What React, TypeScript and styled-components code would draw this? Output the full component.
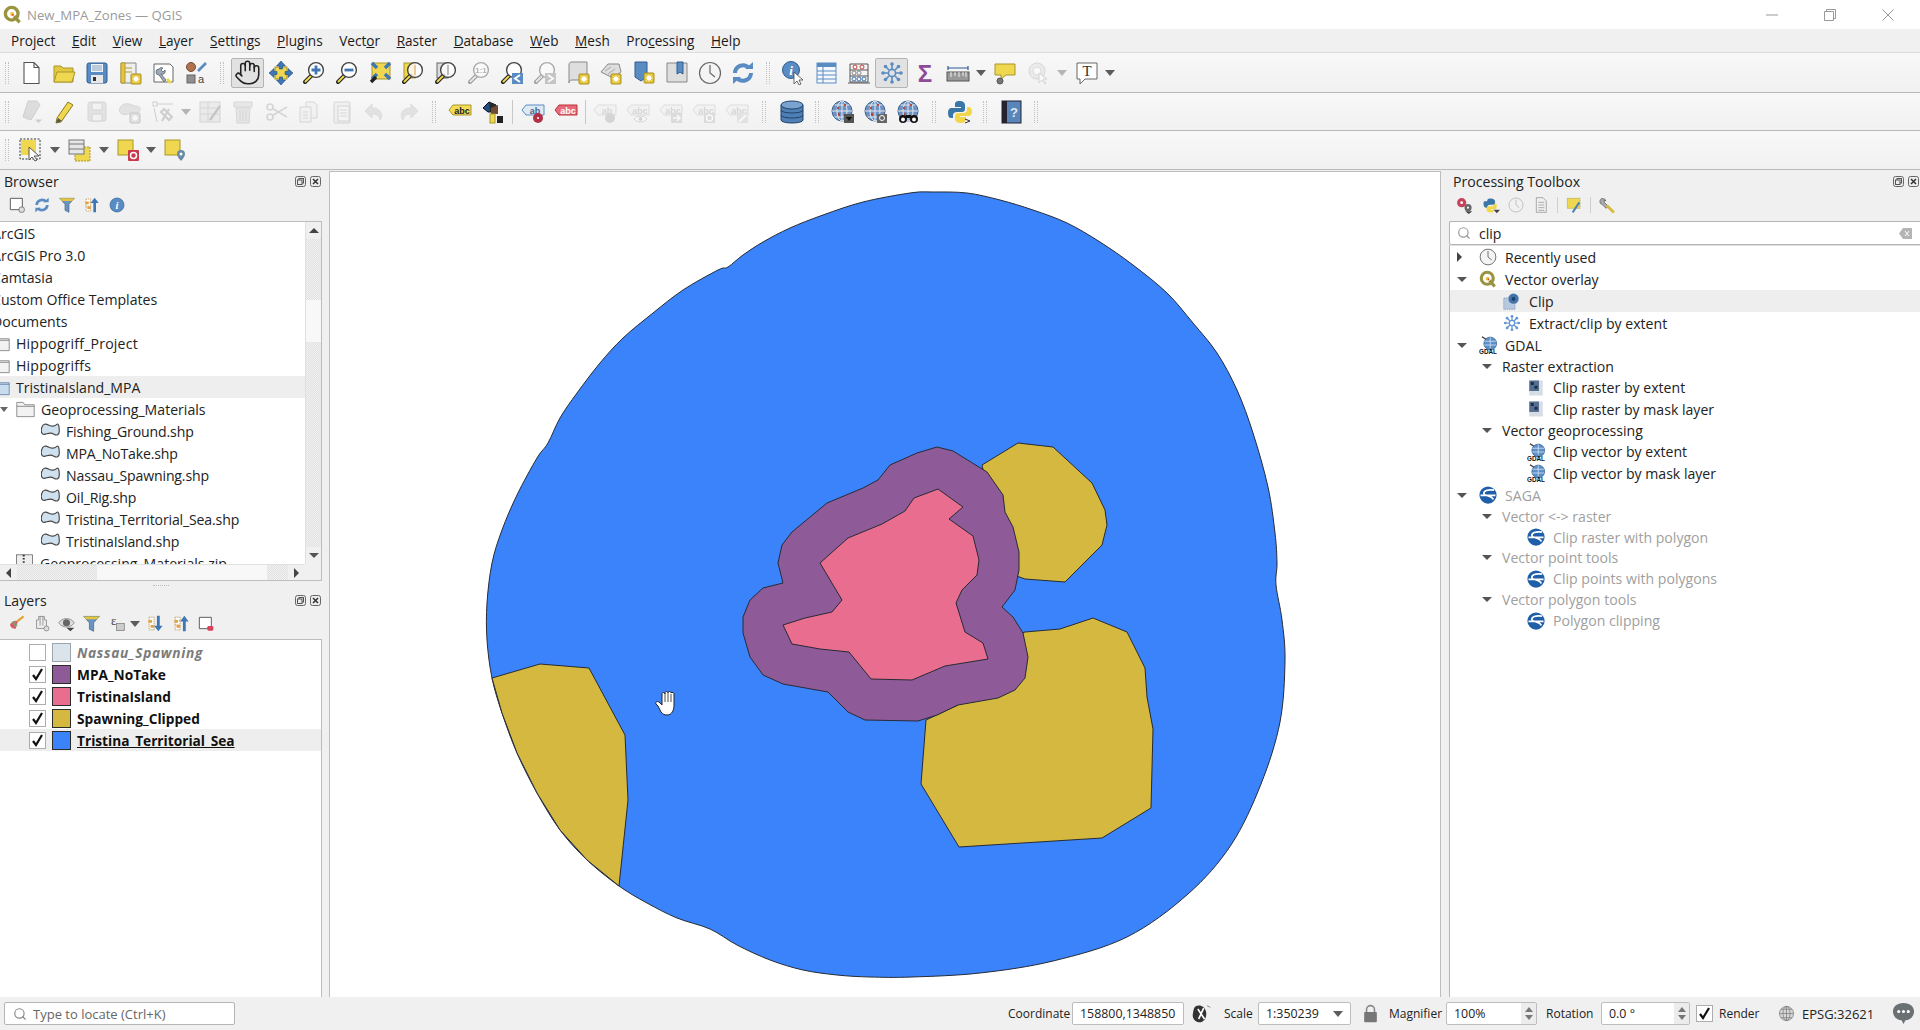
import React from "react";
import styled, { createGlobalStyle } from "styled-components";
import { Hand, Search } from "lucide-react";

const Global = createGlobalStyle`
  html, body { margin: 0; padding: 0; background: #f0f0f0; overflow: hidden; }
  * { box-sizing: border-box; }
`;

const FONT = `"Open Sans", "Noto Sans", "Liberation Sans", sans-serif`;
const Y = "#efd84f", YD = "#a8962c", B = "#5a8cc4", BD = "#2d5c90";

/* ---------- icon drawing helpers ---------- */
const Star = ({ x = 18, y = 18 }: { x?: number; y?: number }) => (
  <g>
    <rect x={x - 5} y={y - 5} width="10" height="10" rx="1" fill="#e6c53a" stroke="#a88f1e" />
    <circle cx={x} cy={y} r="2.3" fill="#fff" />
    <path d={`M${x - 3.5} ${y}h7M${x} ${y - 3.5}v7M${x - 2.5} ${y - 2.5}l5 5M${x + 2.5} ${y - 2.5}l-5 5`} stroke="#fff" strokeWidth="1" />
  </g>
);
const Lens = ({ fill = "#fff", children }: { fill?: string; children?: React.ReactNode }) => (
  <g>
    <path d="M9.5 14.5L3 21" stroke="#222" strokeWidth="4" strokeLinecap="round" />
    <path d="M9 15L3.5 20.5" stroke={Y} strokeWidth="2" strokeLinecap="round" />
    <circle cx="14" cy="9" r="7.4" fill={fill} stroke="#444" strokeWidth="1.4" />
    {children}
  </g>
);
const Refresh = () => (
  <g fill="none" stroke={B} strokeWidth="4">
    <path d="M4 12a8 8 0 0 1 14-5" />
    <path d="M20 12a8 8 0 0 1-14 5" />
    <path d="M14 8h8V1zM10 16H2v7z" fill={B} stroke="none" />
  </g>
);
const Snow = ({ c = B }: { c?: string }) => (
  <g stroke={c} fill="none" strokeWidth="1.6">
    <circle cx="12" cy="12" r="3.6" />
    <path d="M12 2v6M12 16v6M2 12h6M16 12h6M5 5l4 4M15 15l4 4M19 5l-4 4M9 15l-4 4" />
    <g fill={c} stroke="none">
      <circle cx="12" cy="3" r="1.8" /><circle cx="12" cy="21" r="1.8" /><circle cx="3" cy="12" r="1.8" /><circle cx="21" cy="12" r="1.8" />
      <circle cx="5.5" cy="5.5" r="1.8" /><circle cx="18.5" cy="18.5" r="1.8" /><circle cx="18.5" cy="5.5" r="1.8" /><circle cx="5.5" cy="18.5" r="1.8" />
    </g>
  </g>
);
const Label = ({ t = "abc", c = "#222", f = "#f3dc55", s = "#a8962c" }: { t?: string; c?: string; f?: string; s?: string }) => (
  <g>
    <path d="M1 10l4-5h18v10H5z" fill={f} stroke={s} />
    <text x="14" y="13.5" fontSize="9" fontWeight="700" fontFamily="Liberation Sans, sans-serif" textAnchor="middle" fill={c}>{t}</text>
  </g>
);
const Globe = () => (
  <g>
    <circle cx="11" cy="11" r="10" fill="#6e93c2" stroke="#3d5f8a" />
    <path d="M1 11h20M11 1v20M3.5 5h15M3.5 17h15" stroke="#dfe8f2" strokeWidth="1" />
    <ellipse cx="11" cy="11" rx="5" ry="10" fill="none" stroke="#dfe8f2" />
    <path d="M6 7h2v2H6zM13 4h2v2h-2zM7 13h2v3H7z" fill="#b4493e" />
  </g>
);
const Sel = () => <rect x="2" y="2" width="15" height="15" fill={Y} stroke={YD} />;
const Saga = () => (
  <g>
    <circle cx="12" cy="12" r="11.5" fill="#1f5ea8" />
    <path d="M20 5.500C11 4 6 7 6.500 10c.5 3.500 11 2 12.500 8M2 12.500h20" fill="none" stroke="#fff" strokeWidth="2.300" />
  </g>
);
const Q = () => (
  <g>
    <circle cx="11" cy="11" r="8" fill="none" stroke="#9a9340" strokeWidth="4.2" />
    <path d="M14 14l7 8" stroke="#9a9340" strokeWidth="4.2" />
    <circle cx="11.5" cy="11.5" r="2.6" fill="#efc53c" />
    <circle cx="12.5" cy="12.5" r="1.1" fill="#d2483a" />
  </g>
);

const ICONS: Record<string, React.ReactNode> = {
  new: <path d="M5 1.5h10l5 5V22.5H5zM15 1.5v5h5" fill="#fff" stroke="#555" strokeWidth="1.1" />,
  open: <g stroke={YD}><path d="M2 21V5h7l2 2h10v14z" fill="#e3c93f" /><path d="M2 21l3-10h18l-3 10z" fill={Y} /></g>,
  save: <g><rect x="2" y="2" width="20" height="20" rx="2" fill={B} stroke={BD} /><rect x="6" y="3" width="12" height="8" fill="#eef2f6" /><path d="M7 5h10M7 7h10M7 9h10" stroke="#8aa3bf" /><rect x="6" y="14" width="12" height="8" fill="#e8e8e8" /><rect x="8" y="16" width="3" height="4" fill="#333" /></g>,
  newLayout: <g><path d="M3 2h15v20H3z" fill="#eee" stroke="#888" /><path d="M3 2h4v20H3zM7 7h7M7 11h7" fill="#e6c53a" stroke="#b79d2c" /><Star /></g>,
  layoutMgr: <g><path d="M3 3h16l3 3v15H3z" fill="#fff" stroke="#666" /><path d="M8 8a3 3 0 0 1 4-1l-2 2 2 2 2-2a3 3 0 0 1-4 4l5 6-2 2-5-7a3 3 0 0 1 0-6z" fill="#9aa9b8" stroke="#555" strokeWidth=".7" /><path d="M16 18l4 4" stroke={Y} strokeWidth="3" /></g>,
  style: <g><circle cx="7" cy="6" r="4.5" fill="#b0714f" stroke="#7a4b33" /><rect x="3" y="14" width="8" height="8" fill="#8f8f8f" stroke="#666" /><path d="M14 10L22 2" stroke={B} strokeWidth="2.6" /><text x="14" y="22" fontSize="11" fontFamily="Liberation Sans,sans-serif" fill="#444">a</text></g>,
  pan: <g><rect x="6" y="6" width="12" height="12" fill={Y} stroke={YD} /><g fill="#3f76b5" stroke="#234f80" strokeWidth=".6"><path d="M12 0l4.5 5h-3v3h-3V5h-3zM12 24l4.5-5h-3v-3h-3v3h-3zM0 12l5-4.5v3h3v3H5v3zM24 12l-5-4.5v3h-3v3h3v3z" /></g></g>,
  zoomIn: <Lens><path d="M14 4.5v9M9.5 9h9" stroke="#3f76b5" strokeWidth="2.8" /></Lens>,
  zoomOut: <Lens><path d="M9.5 9h9" stroke="#3f76b5" strokeWidth="2.8" /></Lens>,
  zoomFull: <g><rect x="4" y="2" width="18" height="16" fill={Y} stroke={YD} /><path d="M4 2l5 5M22 2l-5 5M4 18l5-5M22 18l-5-5" stroke="#3f76b5" strokeWidth="3.5" /><path d="M8 16L3 21" stroke="#222" strokeWidth="3.4" /></g>,
  zoomSel: <g><rect x="3" y="2" width="11" height="15" fill={Y} stroke={YD} /><Lens fill="#ffffffcc"><path d="M14 4v10" stroke="#e8c9a0" strokeWidth="2" /></Lens></g>,
  zoomLayer: <g><rect x="3" y="2" width="11" height="15" fill="#ddd" stroke="#666" /><Lens fill="#ffffffcc"><path d="M14 4v10" stroke="#bbb" strokeWidth="2" /></Lens></g>,
  zoom11: <Lens><text x="14" y="12" fontSize="8" fontWeight="700" textAnchor="middle" fontFamily="Liberation Sans,sans-serif" fill="#555">1:1</text></Lens>,
  zoomLast: <g><Lens /><rect x="12" y="12" width="11" height="11" fill={B} /><path d="M20 14l-5 3.5 5 3.5" fill="none" stroke="#fff" strokeWidth="2" /></g>,
  zoomNext: <g><Lens /><rect x="12" y="12" width="11" height="11" fill={B} /><path d="M15 14l5 3.5-5 3.5" fill="none" stroke="#fff" strokeWidth="2" /></g>,
  newMap: <g><path d="M3 4c0-2 1-3 3-3h15v18H6c-2 0-3 1-3 3z" fill="#dedede" stroke="#888" /><Star x={18} y={18} /></g>,
  map3d: <g><path d="M2 11L9 3h11l2 8-8 6z" fill="#dedede" stroke="#888" /><path d="M6 10l6-4M9 13l7-5" stroke="#aaa" /><Star x={17} y={18} /></g>,
  newBm: <g><path d="M3 1h12v15l-6 4-6-4z" fill={B} stroke={BD} /><Star x={17} y={17} /></g>,
  showBm: <g><path d="M2 2h20v19H2z" fill="#dedede" stroke="#888" /><path d="M12 1h6v12l-3-2-3 2z" fill={B} stroke={BD} /></g>,
  clock: <g><circle cx="12" cy="12" r="10.5" fill="#f4f4f4" stroke="#666" strokeWidth="1.2" /><path d="M12 4v8l5 4" fill="none" stroke="#666" strokeWidth="1.2" /></g>,
  refresh: <Refresh />,
  identify: <g><circle cx="10" cy="9" r="8.5" fill={B} stroke={BD} /><text x="10" y="14" fontSize="13" fontWeight="700" fontStyle="italic" textAnchor="middle" fontFamily="Liberation Serif,serif" fill="#fff">i</text><path d="M13 11v12l3-3 2 4 2-1-2-4h4z" fill="#fff" stroke="#444" strokeWidth=".8" /></g>,
  table: <g><rect x="3" y="2" width="19" height="20" fill="#f4f7fb" stroke={B} /><rect x="3" y="2" width="19" height="4" fill={B} /><path d="M3 10h19M3 14h19M3 18h19M9 6v16" stroke={B} /></g>,
  calc: <g fill="none"><path d="M3 3v18h18V3M3 3h18M1 22h22" stroke="#555" /><path d="M3 9h18M3 15h18" stroke="#555" /><circle cx="8" cy="6" r="2" stroke="#c0443a" /><circle cx="15" cy="6" r="2" stroke="#c0443a" /><circle cx="7" cy="12" r="2" stroke="#888" /><circle cx="12" cy="12" r="2" stroke="#888" /><circle cx="7" cy="18" r="2" stroke="#3f76b5" /><circle cx="12" cy="18" r="2" stroke="#3f76b5" /><circle cx="17" cy="18" r="2" stroke="#3f76b5" /></g>,
  gear: <Snow />,
  sigma: <text x="12" y="21" fontSize="24" fontWeight="700" textAnchor="middle" fontFamily="Liberation Sans,sans-serif" fill="#8e4a98">Σ</text>,
  measure: <g><path d="M2 7h20M2 5v4M22 5v4" stroke="#2d5c90" strokeWidth="1.2" /><rect x="1" y="11" width="22" height="9" fill="#999" stroke="#555" /><path d="M5 11v5M9 11v4M13 11v5M17 11v4M20 11v5" stroke="#eee" /></g>,
  tip: <g><path d="M2 3h20v11H13l-5 4v-4H2z" fill={Y} stroke={YD} /><circle cx="7" cy="20" r="3" fill="#777" stroke="#555" /></g>,
  maptip: <g><circle cx="11" cy="10" r="8" fill="#ddd" stroke="#aaa" /><circle cx="11" cy="10" r="4" fill="#fff" stroke="#bbb" /><path d="M13 12v10l3-3 3 4 1-1-3-4h4z" fill="#fff" stroke="#aaa" /></g>,
  textAnn: <g><path d="M2 2h20v16H10l-5 5v-5H2z" fill="#fff" stroke="#666" /><text x="12" y="15" fontSize="15" textAnchor="middle" fontFamily="Liberation Serif,serif" fill="#333">T</text></g>,
  edits: <g><path d="M9 1h9l3 4-9 15-8-3z" fill="#bbb" stroke="#999" /><path d="M16 19.500h7l-3.500 3.500z" fill="#999" /></g>,
  pencil: <g><path d="M16 2l5 3L9 22l-5 1 1-5z" fill={Y} stroke="#8a7a20" /><path d="M6 18l4 3-6 2z" fill="#555" /></g>,
  saveEd: <g fill="#ccc" stroke="#aaa"><rect x="3" y="2" width="18" height="19" rx="2" /><rect x="7" y="3" width="10" height="7" fill="#eee" /><rect x="7" y="14" width="10" height="7" fill="#eee" /></g>,
  addFeat: <g><path d="M2 8c2-5 8-5 12-3s8 0 8 4-5 6-9 5-6 2-9 0-3-3-2-6z" fill="#c8c8c8" stroke="#aaa" /><Star x={17} y={18} /></g>,
  vertex: <g fill="none" stroke="#999"><rect x="2" y="2" width="4" height="4" /><path d="M6 4h16M3 8l3 14" /><path d="M10 12l8 8 3-3-8-8-3 3zM18 9l-7 12" strokeWidth="2" /></g>,
  attr: <g><rect x="2" y="2" width="20" height="20" fill="#ddd" stroke="#aaa" /><path d="M2 8h20M2 14h20M10 2v20" stroke="#aaa" /><path d="M12 20L22 6" stroke="#888" strokeWidth="2.4" /></g>,
  del: <g fill="#d4d4d4" stroke="#aaa"><path d="M3 2h18v5H3z" /><path d="M5 8h14l-1 15H6z" /><path d="M9 10v11M12 10v11M15 10v11" /></g>,
  cut: <g fill="none" stroke="#aaa" strokeWidth="1.6"><circle cx="6" cy="7" r="3" /><circle cx="6" cy="17" r="3" /><path d="M8.500 8.500L23 17M8.500 15.500L23 7" /></g>,
  copy: <g fill="#eee" stroke="#aaa"><path d="M9 2h8l3 3v13H9z" /><path d="M3 7h11v15H3zM6 12h5M6 15h5M6 18h5" /></g>,
  paste: <g fill="#e8e8e8" stroke="#aaa"><rect x="4" y="2" width="16" height="21" rx="1" /><rect x="8" y="6" width="11" height="15" fill="#f5f5f5" /><path d="M10 10h7M10 13h7M10 16h7" /></g>,
  undo: <path d="M9 4L2 11l7 7v-4c4 0 7 1 8 6 3-3 3-12-8-12z" fill="#c8c8c8" stroke="#bbb" />,
  redo: <path d="M15 4l7 7-7 7v-4c-4 0-7 1-8 6-3-3-3-12 8-12z" fill="#c8c8c8" stroke="#bbb" />,
  abc: <Label />,
  diag: <g><path d="M2 8l6-6 7 3v7H7z" fill="#1f4f82" stroke="#111" /><path d="M8 2l7 3v7H9z" fill="#2a2a2a" /><path d="M10 8l7-3v9h-7z" fill="#6e4a33" /><rect x="9" y="14" width="5" height="9" fill={Y} stroke={YD} /><rect x="16" y="16" width="6" height="7" fill="#222" /></g>,
  abPin: <g><Label t="ab" c="#46668c" f="#dfe9f4" s="#5a8cc4" /><circle cx="17" cy="18" r="5" fill="#b03048" /><circle cx="17" cy="18" r="1" fill="#fff" /></g>,
  abcRed: <g><Label c="#fff" f="#e66a7c" s="#b33" /></g>,
  abGray: <g><Label t="ab" c="#aaa" f="#eee" s="#bbb" /><circle cx="17" cy="18" r="5" fill="#aaa" /></g>,
  abcEye: <g><Label c="#aaa" f="#eee" s="#bbb" /><path d="M8 19c3-4 10-4 13 0-3 4-10 4-13 0z" fill="#fff" stroke="#aaa" /><circle cx="14.500" cy="19" r="2" fill="#aaa" /></g>,
  abcArrow: <g><Label c="#aaa" f="#eee" s="#bbb" /><rect x="12" y="13" width="11" height="10" fill="#bbb" /><path d="M14 18h6M18 15l3 3-3 3" stroke="#fff" strokeWidth="1.6" fill="none" /></g>,
  abcRot: <g><Label c="#aaa" f="#eee" s="#bbb" /><rect x="12" y="13" width="11" height="10" fill="#bbb" /><circle cx="17.500" cy="18" r="3" fill="none" stroke="#fff" strokeWidth="1.5" /></g>,
  abcEdit: <g><Label c="#aaa" f="#eee" s="#bbb" /><rect x="12" y="13" width="11" height="10" fill="#ccc" /><path d="M14 22l7-7" stroke="#fff" strokeWidth="2" /></g>,
  db: <g fill="#4e7fb5" stroke="#20426b"><path d="M1 5v15c0 4 22 4 22 0V5z" /><ellipse cx="12" cy="5" rx="11" ry="4" fill="#7ba3cf" /><path d="M1 10c0 4 22 4 22 0M1 15c0 4 22 4 22 0" fill="none" /></g>,
  globeDown: <g><Globe /><rect x="13" y="14" width="10" height="9" fill="#555" /><path d="M15 17h6l-3 4z" fill="#111" /></g>,
  globeMag: <g><Globe /><rect x="13" y="14" width="10" height="9" fill="#666" /><circle cx="18" cy="18" r="2.500" fill="none" stroke="#fff" /></g>,
  globeBin: <g><Globe /><circle cx="6" cy="19" r="4" fill="#111" /><circle cx="17" cy="19" r="4" fill="#111" /><circle cx="6" cy="19.500" r="2" fill="#fff" /><circle cx="17" cy="19.500" r="2" fill="#fff" /><path d="M9 15h5v3H9z" fill="#111" /></g>,
  python: <g><path d="M12 1C7 1 7 3 7 5v2h6v1H4c-3 0-4 2-4 5s1 5 3 5h2v-3c0-2 2-3 4-3h5c2 0 3-1 3-3V5c0-2-2-4-5-4z" fill="#3a76a8" /><path d="M12 23c5 0 6-2 6-4v-2h-6v-1h8c3 0 4-2 4-4s-1-5-3-5h-2v3c0 2-2 3-4 3h-5c-2 0-3 1-3 3v3c0 2 2 4 5 4z" fill="#f2d64a" /><path d="M17 19l5 2-5 2" fill="none" stroke="#333" /></g>,
  help: <g><rect x="3" y="1" width="19" height="22" fill="#5a85b8" stroke="#223" /><rect x="3" y="1" width="5" height="22" fill="#223" /><text x="15" y="17" fontSize="13" fontWeight="700" textAnchor="middle" fontFamily="Liberation Sans,sans-serif" fill="#dfe8f2">?</text></g>,
  selFeat: <g><rect x="1" y="1" width="20" height="20" fill="none" stroke="#333" strokeDasharray="2 1.500" /><rect x="2" y="2" width="15" height="15" fill={Y} /><path d="M10 9v13l3-3 3 4 2-1-3-4h5z" fill="#fff" stroke="#555" /></g>,
  selAttr: <g><rect x="7" y="9" width="15" height="14" fill={Y} stroke={YD} strokeDasharray="2 1" /><rect x="1" y="2" width="15" height="14" fill="#e6e6e6" stroke="#777" /><path d="M1 6h15M1 11h15" stroke="#777" /></g>,
  desel: <g><Sel /><rect x="12" y="12" width="11" height="11" rx="1" fill="#c9384c" /><circle cx="17.500" cy="17.500" r="3" fill="none" stroke="#fff" strokeWidth="1.500" /></g>,
  selPin: <g><Sel /><path d="M18 12a4 4 0 0 0-4 4c0 3 4 7 4 7s4-4 4-7a4 4 0 0 0-4-4z" fill="#6c8aa8" /><circle cx="18" cy="16" r="1.500" fill="#fff" /></g>,
  addSel: <g><path d="M2 2h18v17H2z" fill="#fff" stroke="#555" strokeWidth="1.400" /><rect x="15" y="15" width="8" height="8" rx="3" fill="#ddd" stroke="#555" /></g>,
  filter: <g><path d="M1 2h22l-8 9v12l-6-3v-9z" fill="#6b93bf" stroke="#3e648f" /><path d="M1 2h22l-3 4H4z" fill="#e6c53a" /></g>,
  collapse: <g><path d="M3 3h7v18H3zM10 8h-7M3 14h7" fill="#fff" stroke="#b08a3c" strokeDasharray="2 1" /><rect x="2" y="7" width="5" height="4" fill="#e6a23c" /><rect x="5" y="14" width="5" height="4" fill="#e6a23c" /><path d="M16 1l6 8h-4v14h-4V9h-4z" fill="#3f76b5" /></g>,
  expand: <g><path d="M3 3h7v18H3z" fill="#fff" stroke="#b08a3c" strokeDasharray="2 1" /><rect x="2" y="7" width="5" height="4" fill="#e6a23c" /><rect x="5" y="14" width="5" height="4" fill="#e6a23c" /><path d="M16 23l6-8h-4V1h-4v14h-4z" fill="#3f76b5" /></g>,
  info: <g><circle cx="12" cy="12" r="10.500" fill={B} stroke={BD} /><text x="12" y="18" fontSize="16" fontWeight="700" fontStyle="italic" textAnchor="middle" fontFamily="Liberation Serif,serif" fill="#fff">i</text></g>,
  paint: <g><path d="M3 13c3-5 8-6 11-4l-3 10c-3 1-8-1-8-6z" fill="#d9586e" /><path d="M6 10l5 7M9 9l4 6" stroke="#6fb06a" strokeWidth="1.500" /><path d="M13 9L22 2" stroke="#e0a52e" strokeWidth="3" /></g>,
  addGroup: <g fill="#eee" stroke="#777"><path d="M8 2h8v5h3v12H5V7h3z" /><path d="M10 2v13M14 2v13" /><circle cx="19" cy="19" r="3.500" fill="#ddd" /></g>,
  eye: <g><path d="M1 11c5-8 17-8 22 0-5 8-17 8-22 0z" fill="#ddd" stroke="#777" /><circle cx="12" cy="11" r="5" fill="#666" /><path d="M12 18h11l-5.500 5z" fill="#444" /></g>,
  eps: <g><text x="8" y="14" fontSize="18" fontFamily="Liberation Serif,serif" textAnchor="middle" fill="#444">ε</text><rect x="12" y="12" width="11" height="10" fill="#ccc" stroke="#777" /></g>,
  removeL: <g><path d="M2 2h18v17H2z" fill="#fff" stroke="#555" strokeWidth="1.400" /><rect x="14" y="15" width="9" height="7" rx="2" fill="#d9435a" /></g>,
  models: <g><circle cx="8" cy="8" r="6.500" fill="#c9405a" /><circle cx="8" cy="8" r="2" fill="#fff" /><circle cx="17" cy="15" r="5" fill="#666" /><circle cx="17" cy="15" r="1.500" fill="#fff" /><path d="M13 20h10l-5 4z" fill="#444" /></g>,
  pyDown: <g><path d="M11 2C6 2 6 4 6 6H2c-2 0-2 9 2 9h2c0-3 2-4 4-4h4c2 0 3-1 3-3V6c0-2-2-4-6-4z" fill="#3a76a8" /><path d="M11 22c4 0 5-2 5-4h-5v-1h6c3 0 3-8 1-8h-2c0 3-2 4-4 4H8c-2 0-3 1-3 3v2c0 2 2 4 6 4z" fill="#f2d64a" /><path d="M15 18h9l-4.500 5z" fill="#444" /></g>,
  doc: <g fill="#f0f0f0" stroke="#888"><path d="M5 1h10l5 5v17H5z" /><path d="M8 8h9M8 12h9M8 16h9M8 20h9" /></g>,
  yellowEdit: <g><path d="M2 2h19v15H2z" fill={Y} stroke={YD} strokeDasharray="2 1" /><path d="M20 8L10 23" stroke="#4c7fb5" strokeWidth="3" /></g>,
  wrench: <g><path d="M4 2a5 5 0 0 0-2 7l3 2 5 5 3-3-5-5-1-3 3 0L8 3z" fill="#aaa" stroke="#555" /><path d="M11 12l10 10" stroke="#d9bb3a" strokeWidth="4" /></g>,
  qgis: <Q />,
  snow: <Snow c="#5f95d4" />,
  clip: <g><rect x="1" y="8" width="15" height="15" fill="#b7c9de" stroke="#7a93b0" strokeDasharray="2 1" /><circle cx="14" cy="9" r="7" fill="#4472a8" stroke="#b7c9de" strokeDasharray="2 1" /><circle cx="14" cy="9" r="2.500" fill="#1b3e6e" /></g>,
  gdal: <g><path d="M4 1l8 5" stroke="#333" strokeWidth="1.800" /><circle cx="15" cy="10" r="8.500" fill="#5c8fc7" stroke="#2d5c90" /><path d="M7 7h16M7 12h16M15 2v14" stroke="#dbe8f6" /><text x="0" y="24" fontSize="10.500" fontWeight="700" fontFamily="Liberation Sans,sans-serif" fill="#111" textLength="24" lengthAdjust="spacingAndGlyphs">GDAL</text></g>,
  rasterClip: <g><rect x="3" y="2" width="18" height="20" fill="#d7dde4" /><rect x="3" y="2" width="13" height="14" fill="#566f90" /><path d="M5 4h4v4H5zM10 9h4v4h-4z" fill="#1b2c46" /></g>,
  saga: <Saga />,
  shp: <path d="M1 7c1-5 5-5 9-3s8 1 10-1 3 3 3 6 1 5-2 7-5-2-9-2-8 3-10 1-2-5-1-8z" fill="#cfe0ef" stroke="#444" strokeWidth="1.400" />,
  folder: <g fill="#f2f2f2" stroke="#777"><path d="M1 21V3h8l2 3h12v15z" /><path d="M1 8h22" /></g>,
  folderBlue: <g fill="#c9dcef" stroke="#5a7da3"><path d="M1 21V3h8l2 3h12v15z" /><path d="M1 8h22" /></g>,
  zip: <g fill="#eee" stroke="#666"><rect x="2" y="1" width="20" height="22" /><path d="M11 1v20" strokeDasharray="2 2" stroke="#333" strokeWidth="2.500" /></g>,
  pointer: <g><path d="M4 3c5-3 12 0 13 7s-3 12-8 12-9-5-8-10 1-7 3-9z" fill="#333" /><path d="M7 6l8 12M14 5L8 18" stroke="#fff" strokeWidth="2" /><path d="M18 2l4 2" stroke="#777" /></g>,
  lock: <g><path d="M7 11V7a5 5 0 0 1 10 0v4" fill="none" stroke="#888" strokeWidth="2" /><rect x="4" y="10" width="16" height="13" rx="1" fill="#777" /></g>,
  crs: <g fill="none" stroke="#777"><circle cx="12" cy="12" r="10" fill="#d6d6d6" /><path d="M2 12h20M12 2v20M4 6h16M4 18h16" /><ellipse cx="12" cy="12" rx="5" ry="10" /></g>,
  msg: <g><path d="M12 1c7 0 11 4 11 9s-4 9-9 9l-2 4-2-4c-5 0-9-4-9-9s4-9 11-9z" fill="#6b7173" /><circle cx="7" cy="10" r="1.600" fill="#fff" /><circle cx="12" cy="10" r="1.600" fill="#fff" /><circle cx="17" cy="10" r="1.600" fill="#fff" /></g>,
};

/* ---------- shared bits ---------- */
const IconSvg = styled.svg<{ $off?: boolean }>`
  display: block;
  flex: none;
  ${(p) => (p.$off ? "filter: grayscale(1); opacity: .42;" : "")}
`;
const Ico = ({ n, s = 24, off }: { n: string; s?: number; off?: boolean }) => (
  <IconSvg width={s} height={s} viewBox="0 0 24 24" $off={off}>{ICONS[n]}</IconSvg>
);

const Page = styled.div`
  width: 1920px;
  height: 1030px;
  display: flex;
  flex-direction: column;
  overflow: hidden;
  background: #f0f0f0;
  color: #1c1c1c;
  font-family: ${FONT};
  font-size: 14.1px;
`;

/* ---------- title and menu ---------- */
const TitleBar = styled.div`
  height: 29px;
  background: #fff;
  display: flex;
  align-items: center;
  padding: 0 3px;
  color: #9b9b9b;
  font-size: 13.2px;
`;
const TitleText = styled.span`
  margin-left: 5px;
  flex: 1;
`;
const WinBtn = styled.div`
  width: 58px;
  height: 29px;
  display: flex;
  align-items: center;
  justify-content: center;
`;
const MenuBar = styled.div`
  height: 24px;
  display: flex;
  align-items: center;
  gap: 16.55px;
  padding: 0 0 1px 11px;
  background: #f0f0f0;
  border-bottom: 1px solid #dcdcdc;
  font-size: 13.6px;
`;
const MenuItem = styled.span`
  white-space: nowrap;
  color: #1a1a1a;
`;

/* ---------- toolbars ---------- */
const ToolRow = styled.div<{ $h: number }>`
  height: ${(p) => p.$h}px;
  display: flex;
  align-items: center;
  background: linear-gradient(#f8f8f8, #f1f1f1);
  border-bottom: 1px solid #b9b9b9;
`;
const ToolCell = styled.div<{ $w: number; $on?: boolean }>`
  width: ${(p) => p.$w}px;
  height: 30px;
  flex: none;
  display: flex;
  align-items: center;
  justify-content: center;
  ${(p) => (p.$on ? "background: #e2e2e2; border: 1px solid #b4b4b4; border-radius: 2px;" : "")}
`;
const GripCell = styled.div<{ $w: number }>`
  width: ${(p) => p.$w}px;
  flex: none;
  display: flex;
  justify-content: center;
`;
const GripDots = styled.div`
  width: 4px;
  height: 22px;
  border-left: 1px dotted #c0c0c0;
  border-right: 1px dotted #c0c0c0;
`;
const SepLine = styled.div<{ $w: number }>`
  width: ${(p) => p.$w}px;
  flex: none;
  height: 24px;
  background: linear-gradient(#c8c8c8, #c8c8c8) center / 1px 100% no-repeat;
`;
const Caret = styled.div<{ $off?: boolean; $w?: number }>`
  width: ${(p) => p.$w ?? 14}px;
  flex: none;
  height: 6px;
  display: flex;
  justify-content: center;
  &::before {
    content: "";
    border-left: 5px solid transparent;
    border-right: 5px solid transparent;
    border-top: 6px solid ${(p) => (p.$off ? "#b5b5b5" : "#5c5c5c")};
  }
`;

type T = string | [string, number];
const Toolbar = ({ items, h }: { items: T[]; h: number }) => (
  <ToolRow $h={h}>
    {items.map((it, i) => {
      const name = typeof it === "string" ? it : it[0];
      const w = typeof it === "string" ? 0 : it[1];
      if (name === "|") return <GripCell key={i} $w={w}><GripDots /></GripCell>;
      if (name === "/") return <SepLine key={i} $w={w} />;
      if (name === "v") return <Caret key={i} $w={w || 14} />;
      if (name === "v!") return <Caret key={i} $w={w || 14} $off />;
      const off = name.startsWith("!");
      const on = name.startsWith("*");
      const n = name.replace(/^[!*]/, "");
      return (
        <ToolCell key={i} $w={33} $on={on}>
          {n === "hand" ? <Hand size={27} color="#222" strokeWidth={1.4} /> : <Ico n={n} off={off} />}
        </ToolCell>
      );
    })}
  </ToolRow>
);

const ROW1: T[] = [["|", 14], "new", "open", "save", "newLayout", "layoutMgr", "style", ["|", 19], "*hand", "pan", "zoomIn", "zoomOut", "zoomFull", "zoomSel", "zoomLayer", "!zoom11", "zoomLast", "!zoomNext", "newMap", "map3d", "newBm", "showBm", "clock", "refresh", ["|", 17], "identify", "table", "calc", "*gear", "sigma", "measure", "v", "tip", "!maptip", ["v!", 16], "textAnn", "v"];
const ROW2: T[] = [["|", 14], "!edits", "pencil", "!saveEd", "!addFeat", "!vertex", "v!", "!attr", "!del", "!cut", "!copy", "!paste", "!undo", "!redo", ["|", 19], "abc", "diag", ["/", 7], "abPin", "abcRed", ["/", 6], "!abGray", "!abcEye", "!abcArrow", "!abcRot", "!abcEdit", ["|", 22], "db", ["|", 18], "globeDown", "globeMag", "globeBin", ["|", 18], "python", ["|", 18], "help", ["|", 18]];
const ROW3: T[] = [["|", 14], "selFeat", ["v", 16], "selAttr", ["v", 15], "desel", "v", "selPin"];

/* ---------- main area ---------- */
const Main = styled.div`
  flex: 1;
  min-height: 0;
  display: flex;
`;
const LeftDock = styled.div`
  width: 322px;
  flex: none;
  display: flex;
  flex-direction: column;
`;
const RightDock = styled.div`
  width: 471px;
  flex: none;
  margin-left: 8px;
  display: flex;
  flex-direction: column;
  min-height: 0;
`;
const PanelHead = styled.div`
  height: 22px;
  flex: none;
  display: flex;
  align-items: center;
  justify-content: space-between;
  padding: 0 1px 0 4px;
  color: #222;
`;
const DockBtns = styled.div`
  display: flex;
  gap: 4px;
`;
const DockBtn = styled.svg`
  display: block;
  width: 11px;
  height: 11px;
`;
const PanelTools = styled.div<{ $h: number; $pl?: number }>`
  height: ${(p) => p.$h}px;
  flex: none;
  display: flex;
  align-items: center;
  padding: 0 0 3px ${(p) => p.$pl ?? 0}px;
`;
const PanelTool = styled.div<{ $w: number }>`
  width: ${(p) => p.$w}px;
  flex: none;
  display: flex;
  align-items: center;
  justify-content: center;
`;
const PanelSep = styled.div<{ $w: number }>`
  width: ${(p) => p.$w}px;
  height: 16px;
  flex: none;
  background: linear-gradient(#cfcfcf, #cfcfcf) center / 1px 100% no-repeat;
`;

const DockIcons = () => (
  <DockBtns>
    <DockBtn viewBox="0 0 11 11"><rect x=".5" y=".5" width="10" height="10" rx="2" fill="#ececec" stroke="#666" /><rect x="4" y="2.500" width="4.500" height="4.500" fill="none" stroke="#555" /><rect x="2.500" y="4" width="4.500" height="4.500" fill="#ececec" stroke="#555" /></DockBtn>
    <DockBtn viewBox="0 0 11 11"><rect x=".5" y=".5" width="10" height="10" rx="2" fill="#ececec" stroke="#666" /><path d="M3 3l5 5M8 3l-5 5" stroke="#333" strokeWidth="1.500" /></DockBtn>
  </DockBtns>
);

/* browser panel */
const BrowserBox = styled.div`
  height: 360px;
  flex: none;
  background: #fff;
  border: 1px solid #bdbdbd;
  border-left: none;
  display: grid;
  grid-template-columns: 1fr 16px;
  grid-template-rows: 1fr 16px;
`;
const Clip = styled.div`
  overflow: hidden;
  min-width: 0;
  min-height: 0;
`;
const BrowserList = styled.div`
  margin-left: -40px;
`;
const BrowserRow = styled.div<{ $x: number; $hl?: boolean; $ls?: number }>`
  height: 22px;
  display: flex;
  align-items: center;
  gap: 6px;
  padding-left: ${(p) => p.$x}px;
  white-space: nowrap;
  color: #222;
  letter-spacing: ${(p) => p.$ls ?? 0}px;
  ${(p) => (p.$hl ? "background: #eeeeee;" : "")}
`;
const TinyCaret = styled.span`
  width: 0;
  height: 0;
  margin-left: -15px;
  margin-right: 2px;
  border-left: 4px solid transparent;
  border-right: 4px solid transparent;
  border-top: 5px solid #666;
`;
const ScrollV = styled.div`
  background: repeating-conic-gradient(#e0e0e0 0 25%, #f2f2f2 0 50%) 0 0 / 2px 2px;
  display: flex;
  flex-direction: column;
  border-left: 1px solid #e0e0e0;
`;
const ScrollEnd = styled.div`
  height: 17px;
  flex: none;
  background: #f0f0f0;
  display: flex;
  align-items: center;
  justify-content: center;
`;
const ThumbV = styled.div`
  height: 42px;
  margin-top: 61px;
  background: #f8f8f8;
`;
const ScrollH = styled.div`
  background: repeating-conic-gradient(#e0e0e0 0 25%, #f2f2f2 0 50%) 0 0 / 2px 2px;
  display: flex;
  border-top: 1px solid #e0e0e0;
`;
const ScrollEndH = styled.div`
  width: 17px;
  flex: none;
  background: #f0f0f0;
  display: flex;
  align-items: center;
  justify-content: center;
`;
const ThumbH = styled.div`
  width: 170px;
  margin-left: 80px;
  background: #f8f8f8;
`;
const Spacer = styled.div`
  flex: 1;
`;
const Tri = styled.span<{ $d: "u" | "d" | "l" | "r" }>`
  width: 0;
  height: 0;
  border-style: solid;
  border-color: transparent;
  ${(p) => p.$d === "u" && "border-width: 0 5px 5px; border-bottom-color: #444;"}
  ${(p) => p.$d === "d" && "border-width: 5px 5px 0; border-top-color: #555;"}
  ${(p) => p.$d === "l" && "border-width: 5px 5px 5px 0; border-right-color: #444;"}
  ${(p) => p.$d === "r" && "border-width: 5px 0 5px 5px; border-left-color: #444;"}
`;
const Corner = styled.div`
  background: #f0f0f0;
`;
const SplitGap = styled.div`
  height: 8px;
  flex: none;
  display: flex;
  justify-content: center;
  align-items: center;
  &::before {
    content: "";
    width: 16px;
    border-top: 1px dotted #bbb;
  }
`;

/* layers panel */
const LayerBox = styled.div`
  flex: 1;
  background: #fff;
  border: 1px solid #bdbdbd;
  border-left: none;
  border-bottom: none;
  padding-top: 1px;
`;
const LayerRow = styled.div<{ $hl?: boolean }>`
  height: 22px;
  display: flex;
  align-items: center;
  padding-left: 29px;
  ${(p) => (p.$hl ? "background: #eeeeee;" : "")}
`;
const CheckBox = styled.div<{ $ml?: number }>`
  width: 17px;
  height: 17px;
  flex: none;
  margin-left: ${(p) => p.$ml ?? 0}px;
  border: 1px solid #adadad;
  background: #fff;
  display: flex;
  align-items: center;
  justify-content: center;
`;
const Swatch = styled.div<{ $c: string; $pale?: boolean }>`
  width: 19px;
  height: 19px;
  margin-left: 6px;
  flex: none;
  background: ${(p) => p.$c};
  border: 1px solid ${(p) => (p.$pale ? "#9aa5ad" : "#2b2b2b")};
`;
const LayerName = styled.span<{ $dim?: boolean; $under?: boolean }>`
  margin-left: 6px;
  font-weight: 700;
  font-size: 13.7px;
  white-space: nowrap;
  color: #111;
  ${(p) => p.$dim && "color: #7b7b7b; font-style: italic; letter-spacing: .7px;"}
  ${(p) => p.$under && "text-decoration: underline;"}
`;

/* canvas */
const Canvas = styled.div`
  width: 1112px;
  flex: none;
  margin: 1px 0 0 7px;
  background: #fff;
  border: 1px solid #bdbdbd;
  border-bottom: none;
  overflow: hidden;
`;
const MapSvg = styled.svg`
  display: block;
  width: 1110px;
  height: 825px;
`;

/* toolbox */
const SearchBox = styled.div`
  height: 24px;
  flex: none;
  background: #fff;
  border: 1px solid #b5b5b5;
  border-right: none;
  border-radius: 2px 0 0 2px;
  display: flex;
  align-items: center;
  padding: 0 8px 0 7px;
  gap: 8px;
`;
const SearchText = styled.span`
  flex: 1;
`;
const ToolTree = styled.div`
  flex: 1;
  min-height: 0;
  background: #fff;
  border-left: 1px solid #b5b5b5;
  border-top: 1px solid #e0e0e0;
`;
const ToolTreeRow = styled.div<{ $h: number; $x: number; $hl?: boolean; $dim?: boolean }>`
  height: ${(p) => p.$h}px;
  padding-left: ${(p) => p.$x}px;
  display: flex;
  align-items: center;
  white-space: nowrap;
  color: ${(p) => (p.$dim ? "#a0a0a0" : "#222")};
  ${(p) => (p.$hl ? "background: #eeeeee;" : "")}
`;
const CaretSlot = styled.div<{ $w: number }>`
  width: ${(p) => p.$w}px;
  flex: none;
  display: flex;
`;
const IconSlot = styled.div`
  width: 18px;
  margin-right: 8px;
  flex: none;
`;

/* status bar */
const StatusBar = styled.div`
  height: 33px;
  flex: none;
  display: flex;
  align-items: center;
  padding-left: 4px;
  background: #f0f0f0;
  font-size: 12px;
  color: #222;
  white-space: nowrap;
`;
const Locator = styled.div`
  width: 231px;
  height: 23px;
  flex: none;
  margin-right: 773px;
  background: #fff;
  border: 1px solid #b5b5b5;
  border-radius: 2px;
  display: flex;
  align-items: center;
  gap: 6px;
  padding-left: 8px;
  color: #666;
  font-size: 13px;
`;
const StatusLabel = styled.span<{ $w: number; $ml?: number; $big?: boolean }>`
  width: ${(p) => p.$w}px;
  margin-left: ${(p) => p.$ml ?? 0}px;
  flex: none;
  ${(p) => (p.$big ? "font-size: 13px;" : "")}
`;
const StatusField = styled.div<{ $w: number; $ml?: number }>`
  width: ${(p) => p.$w}px;
  margin-left: ${(p) => p.$ml ?? 0}px;
  height: 23px;
  flex: none;
  background: #fff;
  border: 1px solid #bdbdbd;
  border-radius: 2px;
  display: flex;
  align-items: center;
  justify-content: space-between;
  padding-left: 7px;
  font-size: 12.4px;
`;
const StatusIcon = styled.div<{ $ml: number }>`
  margin-left: ${(p) => p.$ml}px;
  flex: none;
`;
const SpinBtns = styled.div`
  width: 15px;
  align-self: stretch;
  display: flex;
  flex-direction: column;
  justify-content: center;
  align-items: center;
  gap: 3px;
  background: #ececec;
`;
const SmallTri = styled.span<{ $up?: boolean }>`
  width: 0;
  height: 0;
  border-left: 4px solid transparent;
  border-right: 4px solid transparent;
  ${(p) => (p.$up ? "border-bottom: 5px solid #777;" : "border-top: 5px solid #777;")}
`;

/* ---------- map geometry ---------- */
const SEA = "910,193 933,192 967,193 1000,200 1033,210 1067,223 1100,242 1133,265 1167,293 1193,323 1217,353 1237,390 1253,433 1268,487 1275,533 1277,563 1276,585 1282,620 1285,661 1280,722 1261,784 1231,845 1188,894 1127,937 1053,961 980,973 912,977 870,977 837,975 803,970 770,960 737,945 710,929 677,918 647,903 619,886 587,860 560,830 537,793 517,753 502,713 492,678 487,640 487,603 492,563 502,530 517,495 537,458 548,443 560,418 577,393 600,363 623,338 653,313 683,290 718,270 728,267 743,255 763,242 790,228 823,215 863,202";
const smooth = (s: string) => {
  const p = s.split(" ").map((q) => q.split(",").map(Number));
  const n = p.length;
  let d = `M${p[0][0]} ${p[0][1]}`;
  for (let i = 0; i < n; i++) {
    const a = p[(i - 1 + n) % n], b = p[i], c = p[(i + 1) % n], e = p[(i + 2) % n];
    d += `C${b[0] + (c[0] - a[0]) / 6} ${b[1] + (c[1] - a[1]) / 6} ${c[0] - (e[0] - b[0]) / 6} ${c[1] - (e[1] - b[1]) / 6} ${c[0]} ${c[1]}`;
  }
  return d + "Z";
};
const YW = "492,678 540,664 589,668 625,735 628,800 619,886 587,860 560,830 537,793 517,753 502,713";
const YNE = "982,465 1018,443 1053,447 1092,483 1105,510 1107,525 1102,545 1065,582 1025,579 1000,570 990,500";
const YSE = "958,705 1000,640 1025,632 1060,629 1093,618 1127,632 1145,668 1147,697 1153,729 1151,808 1102,838 959,847 921,784 926,720";
const PUR = "937,447 953,451 987,472 1003,495 1005,512 1013,527 1019,552 1019,570 1015,590 1002,607 1013,617 1023,633 1028,657 1025,678 1015,690 998,698 958,705 937,715 918,721 865,720 848,712 828,692 783,684 763,675 750,657 743,633 743,617 750,600 763,588 783,583 778,563 782,545 792,532 827,503 863,488 878,480 890,465 917,453";
const PIN = "938,489 963,507 949,519 973,536 979,560 977,575 962,590 956,603 965,632 983,643 988,659 945,666 912,680 871,679 849,652 820,649 792,644 783,625 805,618 832,612 842,600 820,563 848,538 882,524 905,511 914,498";

const MENU: [string, string, string][] = [["Pro", "j", "ect"], ["", "E", "dit"], ["", "V", "iew"], ["", "L", "ayer"], ["", "S", "ettings"], ["", "P", "lugins"], ["Vect", "o", "r"], ["", "R", "aster"], ["", "D", "atabase"], ["", "W", "eb"], ["", "M", "esh"], ["Pro", "c", "essing"], ["", "H", "elp"]];

const BROWSER: { t: string; x: number; i?: string; hl?: boolean; caret?: boolean; ls?: number }[] = [
  { t: "ArcGIS", x: 7, i: "folder" }, { t: "ArcGIS Pro 3.0", x: 7, i: "folder" }, { t: "Camtasia", x: 7, i: "folder" },
  { t: "Custom Office Templates", x: 7, i: "folder" }, { t: "Documents", x: 7, i: "folder" },
  { t: "Hippogriff_Project", x: 31, i: "folder", ls: .2 }, { t: "Hippogriffs", x: 31, i: "folder", ls: .2 },
  { t: "TristinaIsland_MPA", x: 31, i: "folderBlue", hl: true },
  { t: "Geoprocessing_Materials", x: 55, i: "folder", caret: true },
  ...["Fishing_Ground.shp", "MPA_NoTake.shp", "Nassau_Spawning.shp", "Oil_Rig.shp", "Tristina_Territorial_Sea.shp", "TristinaIsland.shp"].map((t) => ({ t, x: 81, i: "shp", ls: -.15 })),
  { t: "Geoprocessing_Materials.zip", x: 55, i: "zip" },
];

const LAYERS = [
  { t: "Nassau_Spawning", c: "#dbe4ea", on: false, dim: true },
  { t: "MPA_NoTake", c: "#8e5a98", on: true },
  { t: "TristinaIsland", c: "#e86d8e", on: true },
  { t: "Spawning_Clipped", c: "#d4b83f", on: true },
  { t: "Tristina_Territorial_Sea", c: "#3a83fb", on: true, under: true, hl: true },
];

type TR = { t: string; h: number; x: number; caret?: "r" | "d"; cw?: number; i?: string; hl?: boolean; dim?: boolean };
const TOOLTREE: TR[] = [
  { t: "Recently used", h: 22, x: 7, caret: "r", cw: 22, i: "clock" },
  { t: "Vector overlay", h: 22, x: 7, caret: "d", cw: 22, i: "qgis" },
  { t: "Clip", h: 22, x: 53, i: "clip", hl: true },
  { t: "Extract/clip by extent", h: 22, x: 53, i: "snow" },
  { t: "GDAL", h: 22, x: 7, caret: "d", cw: 22, i: "gdal" },
  { t: "Raster extraction", h: 21, x: 32, caret: "d", cw: 20 },
  { t: "Clip raster by extent", h: 21, x: 77, i: "rasterClip" },
  { t: "Clip raster by mask layer", h: 22, x: 77, i: "rasterClip" },
  { t: "Vector geoprocessing", h: 21, x: 32, caret: "d", cw: 20 },
  { t: "Clip vector by extent", h: 21, x: 77, i: "gdal" },
  { t: "Clip vector by mask layer", h: 22, x: 77, i: "gdal" },
  { t: "SAGA", h: 22, x: 7, caret: "d", cw: 22, i: "saga", dim: true },
  { t: "Vector <-> raster", h: 21, x: 32, caret: "d", cw: 20, dim: true },
  { t: "Clip raster with polygon", h: 20, x: 77, i: "saga", dim: true },
  { t: "Vector point tools", h: 21, x: 32, caret: "d", cw: 20, dim: true },
  { t: "Clip points with polygons", h: 21, x: 77, i: "saga", dim: true },
  { t: "Vector polygon tools", h: 21, x: 32, caret: "d", cw: 20, dim: true },
  { t: "Polygon clipping", h: 21, x: 77, i: "saga", dim: true },
];

const Tick = () => (
  <svg width="13" height="13" viewBox="0 0 13 13"><path d="M2 7l3 4 6-10" fill="none" stroke="#111" strokeWidth="2.200" /></svg>
);

export default function App() {
  return (
    <Page>
      <Global />
      <TitleBar>
        <Ico n="qgis" s={19} />
        <TitleText>New_MPA_Zones — QGIS</TitleText>
        <WinBtn><svg width="12" height="12"><path d="M0 6h12" stroke="#999" /></svg></WinBtn>
        <WinBtn><svg width="12" height="12"><path d="M.5 2.500h9v9h-9zM2.500 2.500v-2h9v9h-2" fill="none" stroke="#999" /></svg></WinBtn>
        <WinBtn><svg width="12" height="12"><path d="M.5.5l11 11M11.500.5l-11 11" stroke="#999" /></svg></WinBtn>
      </TitleBar>
      <MenuBar>
        {MENU.map(([a, b, c]) => (
          <MenuItem key={a + b + c}>{a}<u>{b}</u>{c}</MenuItem>
        ))}
      </MenuBar>
      <Toolbar items={ROW1} h={40} />
      <Toolbar items={ROW2} h={38} />
      <Toolbar items={ROW3} h={39} />
      <Main>
        <LeftDock>
          <PanelHead>Browser<DockIcons /></PanelHead>
          <PanelTools $h={29} $pl={4}>
            {["addSel", "refresh", "filter", "collapse", "info"].map((n) => (
              <PanelTool key={n} $w={25}><Ico n={n} s={16} /></PanelTool>
            ))}
          </PanelTools>
          <BrowserBox>
            <Clip>
              <BrowserList>
                {BROWSER.map((r) => (
                  <BrowserRow key={r.t} $x={r.x} $hl={r.hl} $ls={r.ls}>
                    {r.caret && <TinyCaret />}
                    <Ico n={r.i!} s={19} />
                    <span>{r.t}</span>
                  </BrowserRow>
                ))}
              </BrowserList>
            </Clip>
            <ScrollV>
              <ScrollEnd><Tri $d="u" /></ScrollEnd>
              <ThumbV />
              <Spacer />
              <ScrollEnd><Tri $d="d" /></ScrollEnd>
            </ScrollV>
            <ScrollH>
              <ScrollEndH><Tri $d="l" /></ScrollEndH>
              <ThumbH />
              <Spacer />
              <ScrollEndH><Tri $d="r" /></ScrollEndH>
            </ScrollH>
            <Corner />
          </BrowserBox>
          <SplitGap />
          <PanelHead>Layers<DockIcons /></PanelHead>
          <PanelTools $h={28} $pl={4}>
            {["paint", "addGroup", "eye", "filter", "eps"].map((n) => (
              <PanelTool key={n} $w={25}><Ico n={n} s={17} /></PanelTool>
            ))}
            <Caret $w={12} />
            <PanelTool $w={28}><Ico n="expand" s={17} /></PanelTool>
            <PanelTool $w={24}><Ico n="collapse" s={17} /></PanelTool>
            <PanelTool $w={25}><Ico n="removeL" s={16} /></PanelTool>
          </PanelTools>
          <LayerBox>
            {LAYERS.map((l) => (
              <LayerRow key={l.t} $hl={l.hl}>
                <CheckBox>{l.on && <Tick />}</CheckBox>
                <Swatch $c={l.c} $pale={l.dim} />
                <LayerName $dim={l.dim} $under={l.under}>{l.t}</LayerName>
              </LayerRow>
            ))}
          </LayerBox>
        </LeftDock>
        <Canvas>
          <MapSvg viewBox="330 172 1110 825">
            <g stroke="#262b36" strokeWidth="1" strokeLinejoin="round">
              <path d={smooth(SEA)} fill="#3a83fb" />
              <polygon points={YW} fill="#d4b83f" />
              <polygon points={YNE} fill="#d4b83f" />
              <polygon points={YSE} fill="#d4b83f" />
              <polygon points={PUR} fill="#8e5a98" />
              <polygon points={PIN} fill="#e86d8e" />
            </g>
            <g transform="translate(0 2)">
              <path d="M658 704l-2-2c-1-2 1-3 3-2l3 3v-11c0-2 3-2 3 0v-1c0-2 3-2 3 0 0-2 3-2 3 0 0-1 3-1 3 1v11c0 5-2 10-7 10-3 0-4-1-6-3z" fill="#fff" stroke="#222" strokeWidth="1" />
              <path d="M665 692v8M668 691v9M671 692v8" stroke="#222" strokeWidth=".8" />
            </g>
          </MapSvg>
        </Canvas>
        <RightDock>
          <PanelHead>Processing Toolbox<DockIcons /></PanelHead>
          <PanelTools $h={29} $pl={1}>
            <PanelTool $w={29}><Ico n="models" s={17} /></PanelTool>
            <PanelTool $w={25}><Ico n="pyDown" s={17} /></PanelTool>
            <PanelTool $w={24}><Ico n="clock" s={16} off /></PanelTool>
            <PanelTool $w={25}><Ico n="doc" s={16} /></PanelTool>
            <PanelSep $w={9} />
            <PanelTool $w={24}><Ico n="yellowEdit" s={16} /></PanelTool>
            <PanelSep $w={9} />
            <PanelTool $w={24}><Ico n="wrench" s={17} /></PanelTool>
          </PanelTools>
          <SearchBox>
            <Search size={14} color="#999" />
            <SearchText>clip</SearchText>
            <svg width="13" height="11" viewBox="0 0 13 11"><path d="M0 5.500L4 0h9v11H4z" fill="#b5b5b5" /><path d="M6 3l4 5M10 3L6 8" stroke="#fff" /></svg>
          </SearchBox>
          <ToolTree>
            {TOOLTREE.map((r) => (
              <ToolTreeRow key={r.t + r.x} $h={r.h} $x={r.x} $hl={r.hl} $dim={r.dim}>
                {r.caret && (
                  <CaretSlot $w={r.cw!}>
                    {r.caret === "r" ? <Tri $d="r" /> : <Tri $d="d" />}
                  </CaretSlot>
                )}
                {r.i && <IconSlot><Ico n={r.i} s={18} /></IconSlot>}
                <span>{r.t}</span>
              </ToolTreeRow>
            ))}
          </ToolTree>
        </RightDock>
      </Main>
      <StatusBar>
        <Locator><Search size={14} color="#888" /><span>Type to locate (Ctrl+K)</span></Locator>
        <StatusLabel $w={61}>Coordinate</StatusLabel>
        <StatusField $w={112} $ml={3}>158800,1348850</StatusField>
        <StatusIcon $ml={8}><Ico n="pointer" s={20} /></StatusIcon>
        <StatusLabel $w={31} $ml={12}>Scale</StatusLabel>
        <StatusField $w={93} $ml={3}>1:350239<Caret $w={24} /></StatusField>
        <StatusIcon $ml={10}><Ico n="lock" s={19} /></StatusIcon>
        <StatusLabel $w={54} $ml={9}>Magnifier</StatusLabel>
        <StatusField $w={91} $ml={3}>100%<SpinBtns><SmallTri $up /><SmallTri /></SpinBtns></StatusField>
        <StatusLabel $w={46} $ml={9}>Rotation</StatusLabel>
        <StatusField $w={89} $ml={9}>0.0 °<SpinBtns><SmallTri $up /><SmallTri /></SpinBtns></StatusField>
        <CheckBox $ml={6}><Tick /></CheckBox>
        <StatusLabel $w={42} $ml={6}>Render</StatusLabel>
        <StatusIcon $ml={17}><Ico n="crs" s={17} /></StatusIcon>
        <StatusLabel $w={70} $ml={7} $big>EPSG:32621</StatusLabel>
        <StatusIcon $ml={20}><Ico n="msg" s={23} /></StatusIcon>
      </StatusBar>
    </Page>
  );
}
